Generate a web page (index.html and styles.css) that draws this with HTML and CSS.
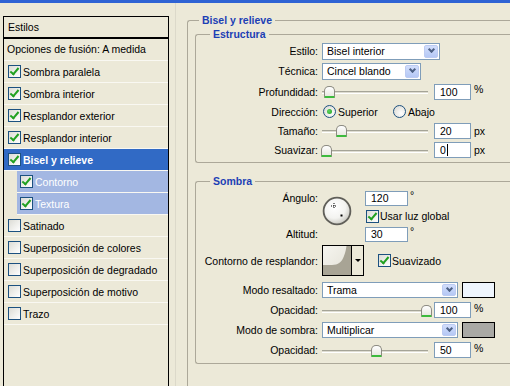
FILE: index.html
```html
<!DOCTYPE html>
<html lang="es">
<head>
    <meta charset="UTF-8">
    <meta name="viewport" content="width=device-width, initial-scale=1.0">
    <title>Estilo de capa</title>
    <link rel="stylesheet" href="styles.css">
</head>
<body>
    <div class="titlebar"></div>
    <div class="dialog">
        <div class="styles-list">
            <div class="list-head">Estilos</div>
            <div class="list-blend">Opciones de fusión: A medida</div>
            <div class="item"><span class="cb on"></span>Sombra paralela</div>
            <div class="item"><span class="cb on"></span>Sombra interior</div>
            <div class="item"><span class="cb on"></span>Resplandor exterior</div>
            <div class="item"><span class="cb on"></span>Resplandor interior</div>
            <div class="item selected"><span class="cb on"></span>Bisel y relieve</div>
            <div class="item sub"><span class="cb on"></span>Contorno</div>
            <div class="item sub"><span class="cb on"></span>Textura</div>
            <div class="item"><span class="cb"></span>Satinado</div>
            <div class="item"><span class="cb"></span>Superposición de colores</div>
            <div class="item"><span class="cb"></span>Superposición de degradado</div>
            <div class="item"><span class="cb"></span>Superposición de motivo</div>
            <div class="item"><span class="cb"></span>Trazo</div>
        </div>

        <div class="settings">
            <fieldset class="group outer">
                <legend>Bisel y relieve</legend>

                <fieldset class="group structure">
                    <legend>Estructura</legend>
                    <div class="row h20">
                        <span class="lbl">Estilo:</span>
                        <div class="select w118"><span>Bisel interior</span><i class="drop"></i></div>
                    </div>
                    <div class="row h20">
                        <span class="lbl">Técnica:</span>
                        <div class="select w99"><span>Cincel blando</span><i class="drop"></i></div>
                    </div>
                    <div class="row h21">
                        <span class="lbl">Profundidad:</span>
                        <div class="slider"><i class="thumb" style="left: 2px"></i></div>
                        <span class="num">100</span>
                        <span class="unit pct">%</span>
                    </div>
                    <div class="row h19">
                        <span class="lbl">Dirección:</span>
                        <span class="opt first"><span class="radio on"></span>Superior</span>
                        <span class="opt"><span class="radio"></span>Abajo</span>
                    </div>
                    <div class="row h19">
                        <span class="lbl">Tamaño:</span>
                        <div class="slider"><i class="thumb" style="left: 14px"></i></div>
                        <span class="num">20</span>
                        <span class="unit">px</span>
                    </div>
                    <div class="row h20">
                        <span class="lbl">Suavizar:</span>
                        <div class="slider"><i class="thumb" style="left: -1px"></i></div>
                        <span class="num"><span class="caret">0</span></span>
                        <span class="unit">px</span>
                    </div>
                </fieldset>

                <fieldset class="group shade">
                    <legend>Sombra</legend>
                    <div class="angle">
                        <span class="lbl a1">Ángulo:</span>
                        <span class="lbl a3">Altitud:</span>
                        <svg class="dial" width="30" height="30" viewBox="0 0 30 30">
                            <defs>
                                <radialGradient id="dialFill" cx="40%" cy="35%" r="70%">
                                    <stop offset="0" stop-color="#ffffff"/>
                                    <stop offset="0.6" stop-color="#f3f3f0"/>
                                    <stop offset="1" stop-color="#c4c3bb"/>
                                </radialGradient>
                            </defs>
                            <circle cx="15" cy="15" r="13.4" fill="url(#dialFill)" stroke="#605f59" stroke-width="1.8"/>
                            <path d="M12 7v6M9 10h6" stroke="#000" stroke-width="1" stroke-dasharray="1 1"/>
                            <rect x="18.5" y="18.5" width="2" height="2" fill="#000"/>
                        </svg>
                        <span class="ctl c1"><span class="num w43">120</span><span class="unit deg">°</span></span>
                        <span class="ctl c2 check"><span class="cb on"></span>Usar luz global</span>
                        <span class="ctl c3"><span class="num w43">30</span><span class="unit deg">°</span></span>
                    </div>
                    <div class="row h31 contour-row">
                        <span class="lbl">Contorno de resplandor:</span>
                        <div class="contour">
                            <svg width="28" height="29" viewBox="0 0 28 29">
                                <defs>
                                    <linearGradient id="contourBg" x1="0" y1="0" x2="1" y2="1">
                                        <stop offset="0" stop-color="#f6f5f0"/>
                                        <stop offset="1" stop-color="#e2e0d5"/>
                                    </linearGradient>
                                </defs>
                                <rect width="28" height="29" fill="url(#contourBg)"/>
                                <path d="M0 29 V19 H9 C15 19 19 16 21 10 C22.5 6 23 3 23.5 0 H28 V29 Z" fill="#a8a495"/>
                            </svg>
                            <span class="cdrop"></span>
                        </div>
                        <span class="check smooth"><span class="cb on"></span>Suavizado</span>
                    </div>
                    <div class="row h20 first-mode">
                        <span class="lbl">Modo resaltado:</span>
                        <div class="select w136"><span>Trama</span><i class="drop"></i></div>
                        <span class="swatch light"></span>
                    </div>
                    <div class="row h20">
                        <span class="lbl">Opacidad:</span>
                        <div class="slider"><i class="thumb" style="left: 99px"></i></div>
                        <span class="num">100</span>
                        <span class="unit pct">%</span>
                    </div>
                    <div class="row h20">
                        <span class="lbl">Modo de sombra:</span>
                        <div class="select w136"><span>Multiplicar</span><i class="drop"></i></div>
                        <span class="swatch gray"></span>
                    </div>
                    <div class="row h20">
                        <span class="lbl">Opacidad:</span>
                        <div class="slider"><i class="thumb" style="left: 49px"></i></div>
                        <span class="num">50</span>
                        <span class="unit pct">%</span>
                    </div>
                </fieldset>
            </fieldset>
        </div>
    </div>
</body>
</html>
```

FILE: styles.css
```css
body {
    margin: 0;
    width: 510px;
    height: 386px;
    overflow: hidden;
    background: #ece9d8;
    font: 10.5px "Liberation Sans", Arial, sans-serif;
    color: #000;
}
.titlebar {
    height: 3px;
    background: #2f63d4;
}
.dialog {
    display: flex;
    align-items: stretch;
    height: 383px;
    padding-left: 3px;
    box-sizing: border-box;
}

/* Styles list on the left (cut off by the bottom of the window) */
.styles-list {
    flex: none;
    width: 166px;
    margin-top: 13px;
    border: 1px solid #000;
    border-bottom: none;
    box-sizing: border-box;
}
.list-head {
    height: 20px;
    line-height: 20px;
    padding-left: 4px;
    border-bottom: 2px solid #000;
}
.list-blend {
    height: 21px;
    line-height: 21px;
    padding-left: 3px;
    border-bottom: 1px solid #f9f8f2;
}
.item {
    display: flex;
    align-items: center;
    gap: 2px;
    height: 21px;
    padding-left: 4px;
    border-bottom: 1px solid #f9f8f2;
}
.item.selected {
    background: #316ac5;
    color: #fff;
    font-weight: bold;
}
.item.sub {
    margin-left: 13px;
    padding-left: 3px;
    background: #a3b7e2;
    color: #fff;
}

/* XP checkbox / radio */
.cb {
    position: relative;
    flex: none;
    width: 13px;
    height: 13px;
    box-sizing: border-box;
    border: 1px solid #1c5180;
    background: linear-gradient(135deg, #dcdcd5, #fff);
}
.cb.on::after {
    content: '';
    position: absolute;
    left: 3px;
    top: 0;
    width: 3px;
    height: 7px;
    border: solid #21a121;
    border-width: 0 2px 2px 0;
    transform: rotate(40deg);
}
.radio {
    position: relative;
    flex: none;
    width: 13px;
    height: 13px;
    box-sizing: border-box;
    border: 1px solid #1c5180;
    border-radius: 50%;
    background: radial-gradient(circle at 65% 65%, #fff, #d6d5cd);
}
.radio.on::after {
    content: '';
    position: absolute;
    left: 3px;
    top: 3px;
    width: 5px;
    height: 5px;
    border-radius: 50%;
    background: radial-gradient(circle at 40% 40%, #5fd35f, #21a121);
}

/* Right side: the group boxes run past the right and bottom edges */
.settings {
    flex: 1;
    display: flex;
    flex-direction: column;
    min-width: 0;
    margin-left: 6px;
    padding: 11px 0 0 11px;
    border-left: 1px solid #dcd9ca;
}
.group {
    margin: 0;
    padding: 0;
    min-width: 0;
    border: 1px solid #aca899;
    border-right: none;
    border-radius: 3px 0 0 3px;
}
.group legend {
    margin-left: 14px;
    padding: 0 3px;
    font-weight: bold;
    color: #1c3fb5;
    line-height: 12px;
}
.outer {
    flex: 1;
    padding: 0 0 0 7px;
    border-bottom: none;
    border-radius: 3px 0 0 0;
}
.outer > legend {
    margin-left: 4px;
}
.structure {
    margin-top: 2px;
    padding: 1px 0 2px;
}
.shade {
    margin-top: 12px;
    padding: 0 0 3px;
}

.row {
    display: flex;
    align-items: center;
}
.h19 { height: 19px; }
.h20 { height: 20px; }
.h21 { height: 21px; }
.h31 { height: 31px; }
.lbl {
    flex: none;
    width: 122px;
    margin-right: 4px;
    text-align: right;
}

/* Combo boxes */
.select {
    display: flex;
    align-items: center;
    height: 17px;
    box-sizing: border-box;
    padding-left: 4px;
    border: 1px solid #7f9db9;
    background: #fff;
}
.select span {
    flex: 1;
}
.w118 { width: 118px; }
.w99 { width: 99px; }
.w136 { width: 136px; height: 16px; }
.drop {
    display: flex;
    align-items: center;
    justify-content: center;
    width: 14px;
    height: calc(100% - 2px);
    margin-right: 1px;
    box-sizing: border-box;
    border: 1px solid #bccbf2;
    border-radius: 2px;
    background: linear-gradient(#d2defc, #b5c8f5);
}
.drop::after {
    content: '';
    width: 3px;
    height: 3px;
    margin-top: -3px;
    border: solid #4d6185;
    border-width: 0 2px 2px 0;
    transform: rotate(45deg);
}

/* Sliders */
.slider {
    position: relative;
    flex: none;
    width: 106px;
    height: 13px;
    background: linear-gradient(to bottom, transparent 6px, #a5a497 6px, #a5a497 7px, #dedcd1 7px, #dedcd1 8px, #fff 8px, #fff 9px, transparent 9px);
}
.thumb {
    position: absolute;
    top: 1px;
    width: 11px;
    height: 12px;
    box-sizing: border-box;
    border: 1px solid #8c8b82;
    border-bottom: 2px solid #3dbb3d;
    border-radius: 5px 5px 1px 1px;
    background: linear-gradient(#fff, #e9e8e1);
}

.num {
    flex: none;
    width: 37px;
    height: 16px;
    line-height: 14px;
    margin-left: 6px;
    padding-left: 5px;
    box-sizing: border-box;
    border: 1px solid #7f9db9;
    background: #fff;
}
.caret {
    padding-right: 1px;
    border-right: 1px solid #000;
}
.unit {
    margin-left: 3px;
}
.pct {
    align-self: flex-start;
    margin-top: 2px;
}

.opt {
    display: flex;
    align-items: center;
    gap: 2px;
}
.opt.first {
    width: 70px;
    margin-left: 1px;
}

/* Angle block */
.angle {
    display: grid;
    grid-template-columns: 126px 30px auto;
    grid-template-rows: 16px 18px 16px;
    row-gap: 1px;
    align-items: center;
    margin-top: 3px;
}
.a1 { grid-column: 1; grid-row: 1; }
.a3 { grid-column: 1; grid-row: 3; }
.dial {
    grid-column: 2;
    grid-row: 1 / span 3;
    align-self: start;
    margin-top: 6px;
}
.ctl {
    grid-column: 3;
    display: flex;
    align-items: center;
    margin-left: 13px;
    height: 100%;
}
.c1 { grid-row: 1; }
.c2 { grid-row: 2; margin-left: 14px; }
.c3 { grid-row: 3; }
.num.w43 {
    width: 43px;
    height: 15px;
    line-height: 13px;
    margin-left: 0;
}
.deg {
    align-self: flex-start;
    margin-left: 2px;
    line-height: 10px;
}
.check {
    display: flex;
    align-items: center;
    gap: 1px;
}

/* Contour picker */
.contour-row {
    margin-top: 3px;
}
.contour {
    display: flex;
    flex: none;
    width: 42px;
    height: 31px;
    box-sizing: border-box;
    border: 1px solid #000;
}
.cdrop {
    flex: 1;
    display: flex;
    align-items: center;
    justify-content: center;
    border-left: 1px solid #000;
    background: #ece9d8;
}
.cdrop::after {
    content: '';
    border-left: 3px solid transparent;
    border-right: 3px solid transparent;
    border-top: 3px solid #000;
}
.smooth {
    margin-left: 14px;
}

.first-mode {
    margin-top: 4px;
}
.swatch {
    flex: none;
    width: 33px;
    height: 16px;
    margin-left: 4px;
    box-sizing: border-box;
    border: 1px solid #000;
}
.swatch.light { background: #eef5fd; }
.swatch.gray { background: #a9a9a5; }
```
